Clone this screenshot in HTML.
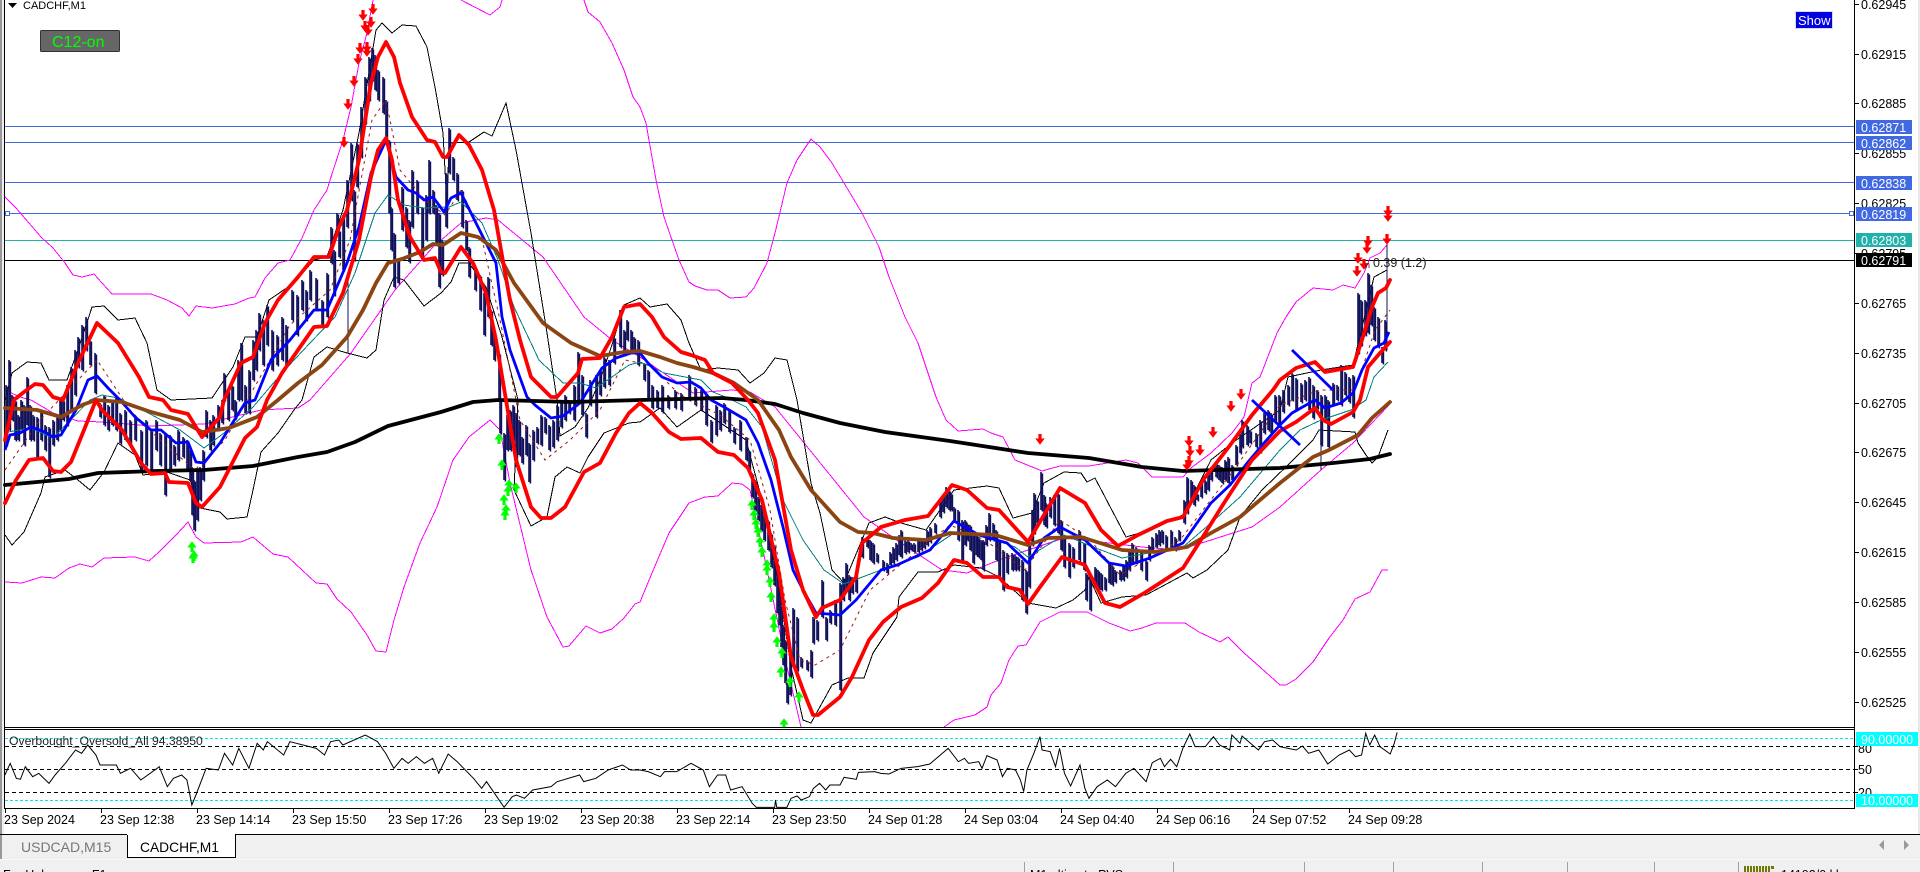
<!DOCTYPE html>
<html><head><meta charset="utf-8"><title>CADCHF,M1</title>
<style>
html,body{margin:0;padding:0;background:#fff;overflow:hidden}
svg{display:block;font-family:"Liberation Sans",sans-serif}
text{font-size:12.5px;fill:#000}
.th{fill:none;stroke-width:1;shape-rendering:crispEdges}
.tk{fill:none;stroke-width:3.8;stroke-linejoin:round;stroke-linecap:round}
.lb{fill:#fff;font-size:12.5px}
</style></head><body>
<svg width="1920" height="872" viewBox="0 0 1920 872" xmlns="http://www.w3.org/2000/svg">
<defs>
<path id="d" d="M-1.600-7h3.200v4.500h3.100L0 3.800-4.700-2.500h3.100z" fill="#ff0000"/>
<path id="u" d="M-1.600 7h3.200V2.500h3.100L0-3.800-4.700 2.500h3.100z" fill="#00ff00"/>
<path id="c" stroke="#10105a" stroke-width="1.600" fill="none" d="
M6 385V445M9 360V430M12 395V420M15 400V440M18 415V440M21 400V430M24 405V445M27 377V425M30 405V440M33 415V440M37 417V457M41 410V440M45 425V450M49 427V477M53 420V445M57 415V440M60 400V430M63 400V420M67 385V425M71 367V410M75 350V395M78 337V367M82 325V370M86 317V350M90 340V365M95 353V393M100 403V417M104 395V425M108 405V430M112 400V425M116 395V430M120 413V443M125 410V440M130 420V445M135 415V440M141 430V470M146 420V465M151 430V470M156 420V450M160 433V465M165 433V495M170 435V470M174 445V465M178 430V460M183 437V457M187 440V470M190 450V480M192 467V515M194 480V530M197 470V520M200 467V500M203 450V480M206 410V437M210 420V450M213 415V445M218 405V430M222 400V423M224 373V400M228 390V420M232 385V410M235 400V417M238 360V400M241 343V400M245 385V413M249 370V413M253 340V380M256 330V370M259 313V350M263 320V365M267 305V345M272 330V370M277 335V365M282 317V360M286 325V365M292 290V320M297 295V335M302 280V310M306 290V320M310 270V300M316 278V310M322 300V327M327 273V317M331 227V263M334 250V295M337 213V233M339 230V257M343 215V270M347 180V227M351 143V200M354 190V260M357 143V187M361 107V157M365 77V123M369 57V100M372 48V80M375 55V90M378 70V100M383 77V113M386 100V140M389 140V213M391 207V250M394 233V287M398 260V283M402 187V230M406 207V247M409 220V262M412 170V227M417 180V213M422 207V257M426 195V240M429 160V213M433 190V213M436 205V245M439 213V287M442 240V275M446 173V227M449 128V173M453 157V180M457 173V200M462 190V227M466 220V250M469 247V277M475 267V290M480 275V310M484 293V335M488 277V317M491 310V345M494 333V360M499 353V400M500 400V433M504 433V480M507 415V450M510 410V450M513 405V440M516 413V467M519 420V455M522 437V463M526 425V455M529 443V482M533 430V460M537 427V443M541 415V445M545 417V433M549 425V450M553 420V447M557 405V440M561 400V427M565 395V420M569 400V413M574 385V420M578 352V400M582 375V415M586 413V437M590 380V405M596 375V417M600 370V395M604 357V387M609 360V385M614 337V363M620 310V347M624 330V355M627 320V340M631 330V350M634 337V353M638 340V365M644 363V380M648 370V400M652 385V408M657 390V408M662 385V412M668 395V408M675 390V408M681 393V410M689 375V400M695 387V405M701 390V410M706 395V425M711 420V442M716 405V435M720 410V430M724 403V423M729 410V432M734 427V443M740 420V450M746 437V460M749 450V470M752 473V497M755 480V510M758 497V520M761 505V530M764 510V540M768 520V550M771 533V567M774 545V585M777 567V613M779 590V625M781 607V647M783 625V665M785 640V683M787 683V703M790 650V695M793 608V667M797 617V670M801 657V667M807 660V670M811 650V677M813 617V643M817 620V640M822 580V617M826 617V640M830 610V623M835 600V625M840 583V690M843 577V600M846 563V590M849 575V600M852 577V593M856 575V592M862 537V557M867 537V547M870 540V560M873 543V563M877 553V562M883 560V570M887 563V573M890 552V565M893 547V563M896 543V560M899 535V555M901 530V557M905 540V553M908 540V552M911 543V550M914 543V552M918 540V552M921 538V550M924 540V548M927 530V545M930 527V542M935 523V533M940 500V517M943 495V512M946 487V507M949 490V510M951 493V510M954 507V520M958 510V540M962 520V560M965 520V545M967 523V540M970 525V550M973 533V563M976 535V555M978 537V557M981 540V560M983 540V570M986 525V545M989 513V540M993 523V540M996 530V560M999 540V577M1003 550V590M1007 553V573M1012 553V570M1015 555V570M1018 557V570M1022 560V600M1026 570V613M1029 543V587M1032 510V545M1034 493V533M1037 500V523M1041 472V510M1044 495V525M1046 503V527M1050 497V517M1054 495V525M1058 493V533M1061 520V550M1064 537V567M1069 543V577M1073 547V567M1079 530V560M1084 543V570M1086 573V600M1090 577V610M1095 567V587M1098 570V590M1101 573V590M1105 577V590M1109 563V583M1112 565V585M1115 570V582M1120 570V580M1123 565V580M1126 560V577M1129 550V570M1132 543V563M1136 547V563M1141 550V570M1146 560V580M1149 545V560M1152 537V550M1156 533V547M1159 530V545M1162 530V543M1166 535V548M1171 530V547M1175 537V550M1179 530V540M1184 500V523M1187 477V513M1191 480V500M1194 485V505M1197 493V500M1201 480V497M1205 480V493M1208 470V490M1211 467V480M1216 463V477M1219 465V480M1222 467V483M1225 460V480M1228 457V483M1232 465V480M1236 445V465M1240 433V453M1242 420V447M1247 425V445M1250 430V443M1256 433V447M1260 420V452M1264 413V433M1268 410V430M1271 413V433M1275 395V420M1279 395V425M1283 390V412M1288 385V405M1292 373V400M1296 378V410M1301 383V402M1305 380V400M1309 377V410M1313 385V418M1317 390V408M1321 395V445M1325 395V420M1328 400V447M1333 383V405M1337 385V400M1341 365V405M1345 372V395M1349 377V402M1353 375V417M1358 293V353M1361 300V345M1365 300V335M1368 273V333M1371 285V325M1374 307V340M1378 317V347M1382 347V363M1385 320V350"/>
</defs>
<rect width="1920" height="872" fill="#fff"/>
<rect x="0" y="0" width="2" height="834" fill="#999"/>
<rect x="2" y="0" width="2" height="834" fill="#eee"/>
<rect x="4" y="0" width="1" height="808" fill="#000"/>

<!-- horizontal levels -->
<g shape-rendering="crispEdges" stroke-width="1">
<path d="M5 126.500H1854M5 142.500H1854M5 182.500H1854M5 213.500H1854" stroke="#4169e1"/>
<path d="M5 240.500H1854" stroke="#20b2aa"/>
<path d="M5 260.500H1854" stroke="#000"/>
</g>
<rect x="5.500" y="211.500" width="4" height="4" fill="#fff" stroke="#4169e1" shape-rendering="crispEdges"/>
<rect x="1849.500" y="211.500" width="4" height="4" fill="#fff" stroke="#4169e1" shape-rendering="crispEdges"/>

<!-- magenta envelopes -->
<g class="th" stroke="#ff00ff" fill="none">
<polyline class="th" points="5,197 16,208 29,223 41,237 53,248 65,263 73,275 82,277 94,274 102,283 112,294 151,294 167,300 182,308 189,316 196,306 212,308 235,304 249,298 255,297 265,278 278,263 290,260 302,238 314,210 327,190 331,177 343,140 351,107 359,63 367,33 373,0"/>
<polyline class="th" points="461,0 490,15 500,7 502,0"/>
<polyline class="th" points="584,0 588,12 600,22 612,43 624,70 633,97 640,107 646,123 656,180 664,217 679,260 689,282 695,286 707,290 718,290 730,298 746,297 754,288 767,263 775,233 787,183 797,160 811,139 820,147 832,163 844,183 862,213 879,247 889,277 905,317 918,343 936,397 946,420 958,431 983,429 991,433 1003,437 1015,460 1042,471 1060,466 1089,466 1126,460 1138,463 1152,477 1183,477 1191,468 1211,453 1232,433 1244,417 1252,383 1260,377 1277,333 1286,317 1296,302 1313,288 1333,290 1343,285 1355,288 1364,273 1370,258 1380,253 1387,245"/>
<polyline class="th" points="5,582 22,583 41,577 55,578 69,568 80,564 92,567 104,558 135,557 149,561 159,552 176,535 188,522 196,537 204,543 241,542 253,537 273,554 288,557 316,583 327,584 337,599 351,612 367,635 376,651 386,652 394,620 404,587 420,543 437,507 453,460 469,437 490,420 500,430 510,483 531,570 547,617 563,647 569,646 586,626 600,633 612,629 624,618 635,604 640,602 652,573 669,533 689,503 705,497 718,496 732,483 742,484 750,490 765,560 787,667 801,727"/>
<polyline class="th" points="944,727 954,720 975,715 987,707 991,695 1001,683 1009,660 1018,646 1026,645 1040,622 1060,612 1087,612 1109,623 1130,631 1142,628 1156,623 1185,623 1199,632 1220,642 1228,637 1244,653 1260,667 1280,685 1286,685 1296,679 1313,662 1329,638 1343,620 1355,599 1370,592 1382,570 1388,570"/>
<polyline class="th" points="5,390 20,397 31,400 53,413 78,421 102,422 151,426 204,424 261,410 298,408 310,400 351,353 395,290 433,247 461,223 486,218 498,220 543,257 584,317 612,340 640,357 693,393 732,390 750,392 775,407 864,517 901,543 942,570 967,573 999,560 1028,550 1064,538 1101,542 1142,547 1179,550 1211,540 1252,527 1280,507 1321,470 1353,443 1389,405"/>
</g>

<!-- thin black bands -->
<g>
<polyline class="th" stroke="#000" points="5,400 12,373 27,362 41,363 49,380 67,380 78,350 92,307 104,306 118,320 135,318 147,343 157,390 171,400 212,398 233,367 245,337 257,337 269,300 294,283 314,260 327,257 343,210 359,133 376,30 382,23 392,33 402,25 416,26 427,47 435,87 443,133 447,207 449,143 469,142 484,132 492,136 506,103 516,150 531,233 547,333 557,400 560,436 575,427 588,408 600,380 612,345 624,305 640,298 650,307 667,304 681,320 689,343 701,370 718,368 738,370 750,383 764,373 775,358 787,360 797,400 811,483 820,513 832,570 844,583 869,523 885,517 901,523 926,530 954,490 987,486 999,488 1013,518 1032,513 1044,483 1064,472 1081,473 1087,482 1095,478 1126,537 1150,530 1183,515 1211,460 1232,443 1280,410 1288,377 1321,370 1353,365 1374,277 1387,270"/>
<polyline class="th" stroke="#000" points="5,535 12,545 24,532 41,493 45,477 65,470 78,480 90,490 104,472 118,443 135,455 143,475 167,472 190,480 200,508 220,512 227,519 247,517 253,490 261,452 278,433 294,410 302,400 314,357 327,347 347,353 367,358 376,350 384,300 394,277 404,280 424,306 441,293 451,282 459,263 469,263 486,287 502,337 518,400 514,490 531,526 547,517 555,477 567,467 580,473 588,457 604,433 629,423 640,422 660,408 677,427 701,410 746,440 762,500 779,587 791,667 803,720 811,723 832,685 848,678 864,678 873,653 897,617 899,597 918,572 938,572 954,565 981,568 999,577 1028,603 1056,608 1073,600 1085,590 1089,577 1101,603 1122,597 1146,595 1187,573 1193,578 1207,570 1228,550 1240,517 1262,490 1288,465 1313,440 1319,430 1355,432 1358,443 1366,455 1372,463 1378,457 1388,430"/>
</g>

<!-- candles -->
<use href="#c"/>
<use href="#c" x="1.400" y="1.500"/>
<path d="M1387 243V350M1321 430V470M348 280V353M439 270V287" stroke="#10105a" stroke-width="1" shape-rendering="crispEdges" fill="none"/>

<!-- dashed center -->
<polyline fill="none" stroke="#a01818" stroke-width="1" stroke-dasharray="3 4" points="5,470 40,420 97,360 130,410 160,440 195,470 225,440 250,395 290,325 330,290 350,240 372,120 386,100 400,170 425,200 445,215 461,190 480,230 500,320 520,420 545,460 570,440 600,410 625,360 650,365 680,395 720,415 750,440 770,510 785,600 800,660 815,665 840,650 870,590 900,565 950,525 985,540 1025,570 1060,520 1090,540 1120,575 1180,540 1230,475 1280,405 1320,390 1355,390 1375,330 1390,310"/>

<!-- teal -->
<polyline class="th" stroke="#008080" points="8,432 31,428 53,438 90,400 102,395 118,398 137,407 180,430 204,448 224,433 253,407 282,373 310,343 335,317 355,273 375,213 388,195 404,205 424,208 449,207 461,202 482,223 498,260 514,307 539,360 563,383 580,383 596,388 612,377 629,365 640,362 652,367 664,373 701,380 713,392 728,398 746,407 762,427 783,500 803,540 824,570 844,584 881,570 918,557 954,533 987,537 1015,547 1028,557 1064,535 1093,547 1122,558 1154,552 1183,547 1211,523 1240,497 1280,450 1300,430 1321,420 1351,410 1366,400 1374,377 1388,362"/>
<!-- blue MA -->
<polyline fill="none" stroke="#0000ff" stroke-width="2.800" stroke-linejoin="round" points="5,450 10,435 20,433 31,427 45,432 53,437 61,435 76,410 80,400 88,380 97,376 108,388 120,400 135,417 151,430 161,430 176,443 188,442 196,462 204,463 220,443 245,403 255,400 271,360 290,340 314,310 327,310 347,263 359,227 371,173 386,140 396,177 408,190 416,193 424,200 433,197 444,212 451,198 461,193 473,217 486,243 496,263 502,317 510,350 527,397 535,405 551,418 563,416 580,403 602,368 616,358 631,353 640,353 648,363 662,377 677,383 691,382 701,388 711,400 724,407 746,420 758,443 771,480 783,527 793,570 803,590 816,613 840,615 856,600 881,570 897,565 930,550 954,521 979,535 1007,543 1028,563 1044,538 1060,527 1085,540 1109,563 1126,566 1150,558 1183,543 1211,503 1230,485 1248,462 1264,443 1280,425 1292,413 1315,400 1325,408 1341,403 1353,393 1362,370 1374,348 1384,343 1389,332"/>
<!-- black MA -->
<polyline class="tk" stroke="#000" points="5,485 37,482 69,479 98,473 155,471 204,470 253,466 298,457 327,452 355,442 388,426 441,412 473,402 498,400 571,402 640,400 722,398 746,400 775,404 803,413 840,423 885,432 950,441 1028,453 1089,458 1142,467 1183,471 1280,468 1333,463 1370,459 1390,454"/>
<!-- brown MA -->
<polyline class="tk" stroke="#8b4513" points="5,408 37,410 61,417 82,405 96,400 122,402 151,412 180,420 202,432 229,428 257,417 278,400 298,383 322,365 347,337 363,310 376,283 388,263 402,259 420,252 433,244 443,245 461,233 478,237 496,250 514,283 543,323 571,343 600,356 624,352 640,351 660,357 677,363 693,367 713,373 734,383 758,400 779,430 791,457 811,490 840,522 858,532 873,533 893,538 926,540 950,533 995,535 1028,545 1048,538 1081,537 1122,550 1154,552 1187,547 1211,533 1240,517 1280,483 1313,457 1329,450 1358,435 1372,418 1390,402"/>
<!-- red bands -->
<polyline class="tk" stroke="#ff0000" points="5,440 14,400 24,392 35,384 43,385 53,397 63,400 78,363 97,323 118,343 139,377 149,397 163,400 171,410 188,414 202,437 220,417 224,400 241,363 253,357 265,323 278,300 298,277 314,257 329,257 339,227 347,210 359,160 371,83 378,57 386,42 394,57 400,83 412,117 427,140 435,142 443,157 447,157 459,135 469,145 482,170 494,210 504,267 510,300 520,340 531,377 551,397 557,397 578,373 582,359 600,358 612,337 624,307 640,304 652,317 664,337 681,352 691,355 705,360 713,373 732,383 748,400 758,413 775,460 791,550 803,590 816,617 822,608 840,600 856,577 862,543 881,527 905,520 928,516 952,485 967,490 987,508 999,510 1028,542 1060,488 1085,503 1101,530 1118,546 1138,535 1167,521 1183,517 1203,480 1228,448 1252,415 1273,390 1280,380 1296,368 1315,362 1325,372 1353,367 1362,340 1372,307 1378,293 1386,288 1390,280"/>
<polyline class="tk" stroke="#ff0000" points="5,503 16,480 29,460 43,458 53,471 61,472 71,462 84,430 96,400 102,410 122,430 141,463 151,474 165,473 169,482 188,483 196,503 202,507 220,487 245,438 257,427 267,400 282,373 314,327 327,326 343,293 359,240 371,177 378,150 386,138 392,160 398,200 410,237 424,260 435,258 441,272 445,273 461,247 473,263 486,293 496,340 506,400 516,460 531,507 541,518 551,518 565,507 584,472 600,463 616,433 629,413 640,403 652,413 669,432 681,439 701,438 718,452 734,455 748,468 762,500 779,573 791,657 803,690 813,715 818,715 840,697 852,677 869,640 883,622 901,607 922,598 938,583 954,560 967,563 983,577 999,577 1007,587 1020,590 1028,604 1040,587 1062,557 1085,565 1105,603 1120,607 1146,592 1183,568 1199,543 1224,503 1252,460 1280,431 1296,422 1315,408 1323,420 1331,424 1353,412 1360,400 1368,367 1380,353 1390,342"/>
<!-- blue trend strokes -->
<path d="M1252 400L1300 445M1292 350L1333 390" stroke="#0000ff" stroke-width="2.800" fill="none"/>

<!-- arrows -->
<g>
<use href="#d" x="373" y="11"/><use href="#d" x="363" y="17"/><use href="#d" x="371" y="24"/><use href="#d" x="365" y="28"/><use href="#d" x="368" y="32"/><use href="#d" x="360" y="50"/><use href="#d" x="367" y="49"/><use href="#d" x="367" y="53"/><use href="#d" x="358" y="61"/><use href="#d" x="354" y="83"/><use href="#d" x="348" y="106"/><use href="#d" x="344" y="144"/>
<use href="#d" x="1040" y="441"/><use href="#d" x="1189" y="443"/><use href="#d" x="1190" y="453"/><use href="#d" x="1189" y="463"/><use href="#d" x="1187" y="467"/><use href="#d" x="1200" y="452"/><use href="#d" x="1213" y="434"/><use href="#d" x="1231" y="408"/><use href="#d" x="1241" y="396"/>
<use href="#d" x="1388" y="213"/><use href="#d" x="1388" y="218"/><use href="#d" x="1387" y="241"/><use href="#d" x="1368" y="243"/><use href="#d" x="1367" y="250"/><use href="#d" x="1358" y="260"/><use href="#d" x="1364" y="266"/><use href="#d" x="1357" y="273"/>
<use href="#u" x="192" y="545"/><use href="#u" x="194" y="554"/><use href="#u" x="193" y="556"/>
<use href="#u" x="499" y="437"/><use href="#u" x="502" y="463"/><use href="#u" x="509" y="483"/><use href="#u" x="516" y="486"/><use href="#u" x="508" y="489"/><use href="#u" x="504" y="498"/><use href="#u" x="506" y="508"/><use href="#u" x="505" y="513"/>
<use href="#u" x="752" y="503"/><use href="#u" x="754" y="513"/><use href="#u" x="756" y="522"/><use href="#u" x="758" y="530"/><use href="#u" x="760" y="540"/><use href="#u" x="762" y="550"/><use href="#u" x="767" y="563"/><use href="#u" x="767" y="568"/><use href="#u" x="770" y="580"/><use href="#u" x="771" y="595"/><use href="#u" x="774" y="617"/><use href="#u" x="774" y="625"/><use href="#u" x="777" y="640"/><use href="#u" x="782" y="651"/><use href="#u" x="781" y="670"/><use href="#u" x="790" y="680"/><use href="#u" x="799" y="695"/><use href="#u" x="784" y="722"/>
</g>
<text x="1365" y="268" style="font-size:9px;fill:#222">n</text>
<text x="1373" y="267" style="fill:#222">0.39 (1.2)</text>

<!-- chart chrome -->
<rect x="5" y="728" width="1850" height="2" fill="#fff"/>
<path d="M4 727.500H1855M4 729.500H1855M4 808.500H1855M1854.500 0V809" stroke="#000" stroke-width="1" shape-rendering="crispEdges" fill="none"/>

<!-- price ticks -->
<path d="M1855 4.500h4M1855 54.500h4M1855 103.500h4M1855 153.500h4M1855 203.500h4M1855 253.500h4M1855 303.500h4M1855 353.500h4M1855 403.500h4M1855 452.500h4M1855 502.500h4M1855 552.500h4M1855 602.500h4M1855 652.500h4M1855 702.500h4" stroke="#000" shape-rendering="crispEdges"/>
<g>
<text x="1861" y="9">0.62945</text><text x="1861" y="59">0.62915</text><text x="1861" y="108">0.62885</text><text x="1861" y="158">0.62855</text><text x="1861" y="208">0.62825</text><text x="1861" y="258">0.62795</text><text x="1861" y="308">0.62765</text><text x="1861" y="358">0.62735</text><text x="1861" y="408">0.62705</text><text x="1861" y="457">0.62675</text><text x="1861" y="507">0.62645</text><text x="1861" y="557">0.62615</text><text x="1861" y="607">0.62585</text><text x="1861" y="657">0.62555</text><text x="1861" y="707">0.62525</text>
</g>
<g shape-rendering="crispEdges">
<rect x="1856" y="120" width="56" height="14" fill="#4169e1"/><rect x="1856" y="136" width="56" height="14" fill="#4169e1"/><rect x="1856" y="176" width="56" height="14" fill="#4169e1"/><rect x="1856" y="207" width="56" height="14" fill="#4169e1"/><rect x="1856" y="233" width="56" height="14" fill="#20b2aa"/><rect x="1856" y="253" width="56" height="14" fill="#000"/>
</g>
<text class="lb" x="1861" y="132" style="fill:#fff">0.62871</text><text class="lb" x="1861" y="148" style="fill:#fff">0.62862</text><text class="lb" x="1861" y="188" style="fill:#fff">0.62838</text><text class="lb" x="1861" y="219" style="fill:#fff">0.62819</text><text class="lb" x="1861" y="245" style="fill:#fff">0.62803</text><text class="lb" x="1861" y="265" style="fill:#fff">0.62791</text>

<!-- header objects -->
<path d="M8 3h9l-4.500 5z" fill="#000"/>
<text x="23" y="9" style="font-size:11px">CADCHF,M1</text>
<rect x="40.500" y="30.500" width="79" height="21" rx="1" fill="#666" stroke="#333"/>
<text x="52" y="47" style="font-size:16px;fill:#00ff00">C12-on</text>
<rect x="1795.500" y="11.500" width="37" height="17" fill="#0000e0" stroke="#d8d8f8"/>
<text x="1798" y="25" style="font-size:13px;fill:#fff">Show</text>

<!-- subwindow -->
<g fill="none" stroke-width="1" shape-rendering="crispEdges">
<path d="M5 738.500H1854M5 800.500H1854" stroke="#00e5e5" stroke-dasharray="3 2"/>
<path d="M5 746.500H1854M5 769.500H1854M5 792.500H1854" stroke="#000" stroke-dasharray="4 3"/>
</g>
<polyline fill="none" stroke="#000" vector-effect="non-scaling-stroke" stroke-width="1" transform="translate(0 720) scale(.40816 .33333)" points="12,165 25,130 40,175 50,178 62,140 80,170 95,160 120,190 135,165 160,130 185,90 200,100 215,75 235,105 245,135 285,135 295,160 320,145 345,180 385,145 390,140 410,200 425,175 445,165 458,180 470,255 480,225 505,145 535,150 550,100 570,135 585,85 610,145 630,70 645,90 655,65 695,105 710,65 775,85 795,105 810,65 830,60 840,75 895,45 925,65 945,100 965,145 985,115 1000,130 1020,110 1040,130 1060,115 1075,160 1098,102 1120,125 1160,175 1180,205 1192,185 1235,262 1255,230 1265,225 1285,235 1305,210 1350,200 1365,185 1420,165 1430,185 1460,175 1490,150 1525,135 1545,150 1568,150 1588,155 1618,170 1628,155 1658,155 1693,130 1723,150 1738,200 1758,165 1778,165 1790,210 1818,200 1843,250 1853,262 1898,262 1900,240 1903,262 1928,262 1938,235 1953,228 1963,240 1983,230 1993,205 2008,190 2023,210 2033,195 2058,195 2068,172 2098,178 2103,157 2143,155 2158,160 2178,162 2208,145 2248,140 2278,132 2323,85 2348,125 2363,115 2373,130 2398,125 2406,145 2418,107 2443,120 2456,170 2468,145 2488,150 2500,180 2508,215 2516,150 2533,100 2548,50 2553,90 2573,95 2586,140 2596,85 2608,160 2623,198 2646,135 2658,205 2668,235 2688,200 2713,180 2733,200 2758,160 2778,145 2808,185 2823,128 2843,115 2853,140 2868,118 2883,140 2898,85 2915,42 2928,80 2953,80 2973,50 2988,75 3013,90 3018,45 3038,70 3043,48 3083,90 3098,65 3118,60 3136,80 3156,85 3176,90 3191,78 3206,100 3231,90 3253,132 3281,105 3306,90 3321,110 3336,105 3346,40 3356,75 3368,45 3381,80 3406,102 3416,70 3423,37"/>
<text x="9" y="745" style="font-size:12.200px;fill:#222">Overbought_Oversold_All 94.38950</text>
<path d="M1855 746.500h3M1855 769.500h3M1855 792.500h3" stroke="#000" shape-rendering="crispEdges"/>
<text x="1858" y="753">80</text><text x="1858" y="774">50</text><text x="1858" y="797">20</text>
<rect x="1856" y="732" width="62" height="14" fill="#00ffff"/>
<rect x="1856" y="794" width="62" height="13" fill="#00ffff"/>
<text class="lb" x="1861" y="744" style="fill:#fff">90.00000</text>
<text class="lb" x="1861" y="805" style="fill:#fff">10.00000</text>

<!-- time axis -->
<path d="M5.500 808v5M101.500 808v5M197.500 808v5M293.500 808v5M389.500 808v5M485.500 808v5M581.500 808v5M677.500 808v5M773.500 808v5M869.500 808v5M965.500 808v5M1061.500 808v5M1157.500 808v5M1253.500 808v5M1349.500 808v5" stroke="#000" shape-rendering="crispEdges"/>
<g>
<text x="4" y="824">23 Sep 2024</text><text x="100" y="824">23 Sep 12:38</text><text x="196" y="824">23 Sep 14:14</text><text x="292" y="824">23 Sep 15:50</text><text x="388" y="824">23 Sep 17:26</text><text x="484" y="824">23 Sep 19:02</text><text x="580" y="824">23 Sep 20:38</text><text x="676" y="824">23 Sep 22:14</text><text x="772" y="824">23 Sep 23:50</text><text x="868" y="824">24 Sep 01:28</text><text x="964" y="824">24 Sep 03:04</text><text x="1060" y="824">24 Sep 04:40</text><text x="1156" y="824">24 Sep 06:16</text><text x="1252" y="824">24 Sep 07:52</text><text x="1348" y="824">24 Sep 09:28</text>
</g>
<rect x="1918" y="0" width="2" height="834" fill="#e8e8e8"/>

<!-- tab bar -->
<rect x="0" y="834" width="1920" height="25" fill="#f0f0f0"/>
<path d="M0 834.500H1920" stroke="#000" shape-rendering="crispEdges"/>
<rect x="0" y="835" width="2" height="24" fill="#999"/>
<rect x="127" y="834" width="108" height="24" fill="#fff"/>
<path d="M127.500 835V857.500H235.500V835" fill="none" stroke="#000" shape-rendering="crispEdges"/>
<text x="21" y="852" style="font-size:14px;fill:#777">USDCAD,M15</text>
<text x="140" y="852" style="font-size:13.800px">CADCHF,M1</text>
<path d="M1884 840v10l-5-5z" fill="#999"/><path d="M1904 840v10l5-5z" fill="#999"/>

<!-- status bar -->
<rect x="0" y="859" width="1920" height="13" fill="#f0f0f0"/>
<path d="M0 859.500H1920" stroke="#f8f8f8" shape-rendering="crispEdges"/>
<g stroke="#a0a0a0" shape-rendering="crispEdges"><path d="M1024.500 862V872M1173.500 862V872M1304.500 862V872M1393.500 862V872M1482.500 862V872M1567.500 862V872M1654.500 862V872M1738.500 862V872"/></g>
<text x="3" y="879" style="font-size:12.500px">For Help, press F1</text>
<text x="1030" y="879" style="font-size:12.500px">M1 ultimate PVS</text>
<text x="1781" y="879" style="font-size:12.500px">14192/0 kb</text>
<g fill="#6b7a00" shape-rendering="crispEdges"><rect x="1744" y="866" width="2" height="6"/><rect x="1747" y="866" width="2" height="6"/><rect x="1750" y="866" width="2" height="6"/><rect x="1753" y="866" width="2" height="6"/><rect x="1756" y="866" width="2" height="6"/><rect x="1759" y="866" width="2" height="6"/><rect x="1762" y="866" width="2" height="6"/><rect x="1765" y="866" width="2" height="6"/><rect x="1768" y="866" width="2" height="6"/><rect x="1771" y="866" width="3" height="3"/></g>
</svg>
</body></html>
